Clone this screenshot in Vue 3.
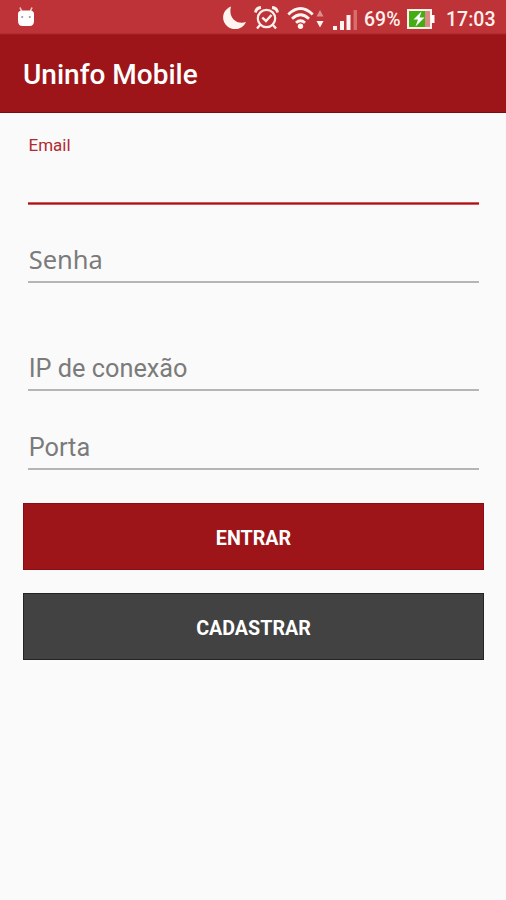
<script setup>
const fields = [
  { id: 'senha', type: 'password', label: 'Senha' },
  { id: 'ip', type: 'text', label: 'IP de conexão' },
  { id: 'porta', type: 'text', label: 'Porta' },
]
</script>

<template>
  <div class="screen">
    <div class="status">
      <svg class="robot" width="18" height="22" viewBox="0 0 18 22">
        <path d="M3 1.500L5 6M15 1.500L13 6" stroke="#f7c9bd" stroke-width="1.600" />
        <path d="M1 8Q1 4.500 5 4.500H13Q17 4.500 17 8V15Q17 20 12.500 20H5.500Q1 20 1 15Z" fill="#fff" />
        <circle cx="5.200" cy="11" r="1.100" fill="#a89494" />
        <circle cx="12.800" cy="11" r="1.100" fill="#a89494" />
      </svg>
      <svg class="moon" width="25" height="25" viewBox="0 0 25 25">
        <path d="M9 1.500C0 5 -1.500 16 5.500 21.500C12 26.500 21 24 24 17C14 20 6 12 9 1.500Z" fill="#fff4f0" />
      </svg>
      <svg class="alarm" width="25" height="24" viewBox="0 0 25 24" fill="none" stroke="#fff0ec">
        <circle cx="12.500" cy="12.500" r="8.700" stroke-width="2.200" />
        <path d="M1.500 6.500Q2 2 7 1.500M23.500 6.500Q23 2 18 1.500" stroke-width="2.800" />
        <path d="M6 19L3 22.500M19 19L22 22.500" stroke-width="2.300" />
        <path d="M8.300 11.700L12 15L17.500 9" stroke-width="2.400" />
      </svg>
      <svg class="wifi" width="27" height="24" viewBox="0 0 27 24" fill="none" stroke="#fff4f0" stroke-width="2.700">
        <path d="M1.300 8.500Q13.500 -3.500 25.700 8.500M5 12.800Q13.500 4.700 22 12.800M9 16.800Q13.500 12.700 18 16.800" />
        <circle cx="13.500" cy="20.300" r="2.700" fill="#fff4f0" stroke="none" />
      </svg>
      <svg class="arrows" width="8" height="20" viewBox="0 0 8 20">
        <path d="M4 1L7.500 7.500H.5Z" fill="#df8d8d" />
        <path d="M.5 12H7.500L4 18.500Z" fill="#fff4f0" />
      </svg>
      <svg class="signal" width="25" height="22" viewBox="0 0 25 22" fill="#fff4f0">
        <rect x="0" y="17" width="4" height="4" />
        <rect x="7" y="12" width="4" height="9" />
        <rect x="13.500" y="6" width="4" height="15" />
        <rect x="20.500" y="1" width="3.500" height="20" fill="#d96c6c" />
      </svg>
      <span class="percent">69%</span>
      <svg class="battery" width="28" height="20" viewBox="0 0 28 20">
        <rect x="1" y="1" width="23" height="18" fill="#d98a82" stroke="#fff0ec" stroke-width="2" />
        <rect x="2" y="2" width="16" height="16" fill="#44ad16" />
        <path d="M24 6H27.500V14H24Z" fill="#fff" />
        <path d="M14.500 2.500L6.500 10.500H11L8.500 17.500L17.500 8.500H12.500Z" fill="#fff" />
      </svg>
      <span class="clock">17:03</span>
    </div>
    <header class="bar"><h1>Uninfo Mobile</h1></header>
    <form class="form" @submit.prevent>
      <label class="email">
        <span>Email</span>
        <input type="text" aria-label="Email" />
      </label>
      <input
        v-for="f in fields"
        :key="f.id"
        class="field"
        :class="f.id"
        :type="f.type"
        :placeholder="f.label"
      />
      <button class="btn enter">ENTRAR</button>
      <button class="btn register" type="button">CADASTRAR</button>
    </form>
  </div>
</template>

<style>
body {
  margin: 0;
  background: #fafafa;
}
</style>

<style scoped>
.screen {
  height: 900px;
  overflow: hidden;
  background: #fafafa;
  font-family: Roboto, sans-serif;
}
.status {
  display: flex;
  align-items: flex-start;
  box-sizing: border-box;
  height: 35px;
  background: linear-gradient(#bd3337 0 33px, #ad2226 34px, #9d1518 35px);
  color: #fff0ec;
  white-space: nowrap;
}
.status svg {
  flex: none;
}
.robot { margin: 6px 0 0 17px; }
.moon { margin: 5px 0 0 187px; }
.alarm { margin: 6px 0 0 7px; }
.wifi { margin: 6px 0 0 8px; }
.arrows { margin: 9px 0 0 2px; }
.signal { margin: 9px 0 0 9px; }
.percent {
  width: 37px;
  margin: 8px 0 0 6px;
  font-size: 19.500px;
  font-weight: 500;
  line-height: 24px;
}
.battery { margin: 9px 0 0 6px; }
.clock {
  margin: 8px 0 0 11px;
  font-size: 19.500px;
  font-weight: 500;
  line-height: 24px;
}
.bar {
  display: flex;
  align-items: center;
  box-sizing: border-box;
  height: 78px;
  padding: 2px 0 0 23px;
  background: #9d1518;
  border-bottom: 1px solid #7c0c0e;
}
h1 {
  margin: 0;
  color: #fff;
  font-size: 28px;
  font-weight: 500;
  line-height: 34px;
}
.form {
  display: flex;
  flex-direction: column;
  padding: 0 22px 0 23px;
}
.email {
  display: flex;
  flex-direction: column;
  margin: 22px 5px 0 5px;
  color: #b02a31;
  font-size: 17px;
  line-height: 20px;
}
.email span {
  padding-left: 0.500px;
}
input {
  box-sizing: border-box;
  min-width: 0;
  padding: 0;
  border: 0;
  outline: 0;
  background: transparent;
  border-radius: 0;
}
.email input {
  height: 50px;
  background: linear-gradient(#d2595b 0 1px, #a51216 1px 2px, #d2595b 2px) bottom / 100% 3px no-repeat;
}
.field {
  height: 44px;
  margin: 35px 5px 0 5px;
  padding-left: 0.700px;
  border-bottom: 2px solid #b5b5b5;
  font: 400 25.300px/42px Roboto, sans-serif;
}
.field::placeholder {
  color: #7b7b7b;
  opacity: 1;
}
.senha {
  margin-top: 34px;
  padding-bottom: 2px;
  font-family: "Noto Sans", sans-serif;
  font-size: 25.500px;
}
.ip {
  height: 43px;
  margin-top: 65px;
}
.porta {
  margin-top: 35px;
}
.btn {
  box-sizing: border-box;
  height: 67px;
  margin: 33px 0 0;
  padding: 4px 0 0;
  border: 1px solid #8b0d10;
  background: #9d1518;
  color: #fff;
  font: 700 19.700px/24px Roboto, sans-serif;
}
.register {
  margin-top: 23px;
  border-color: #242424;
  background: #424242;
}
</style>
